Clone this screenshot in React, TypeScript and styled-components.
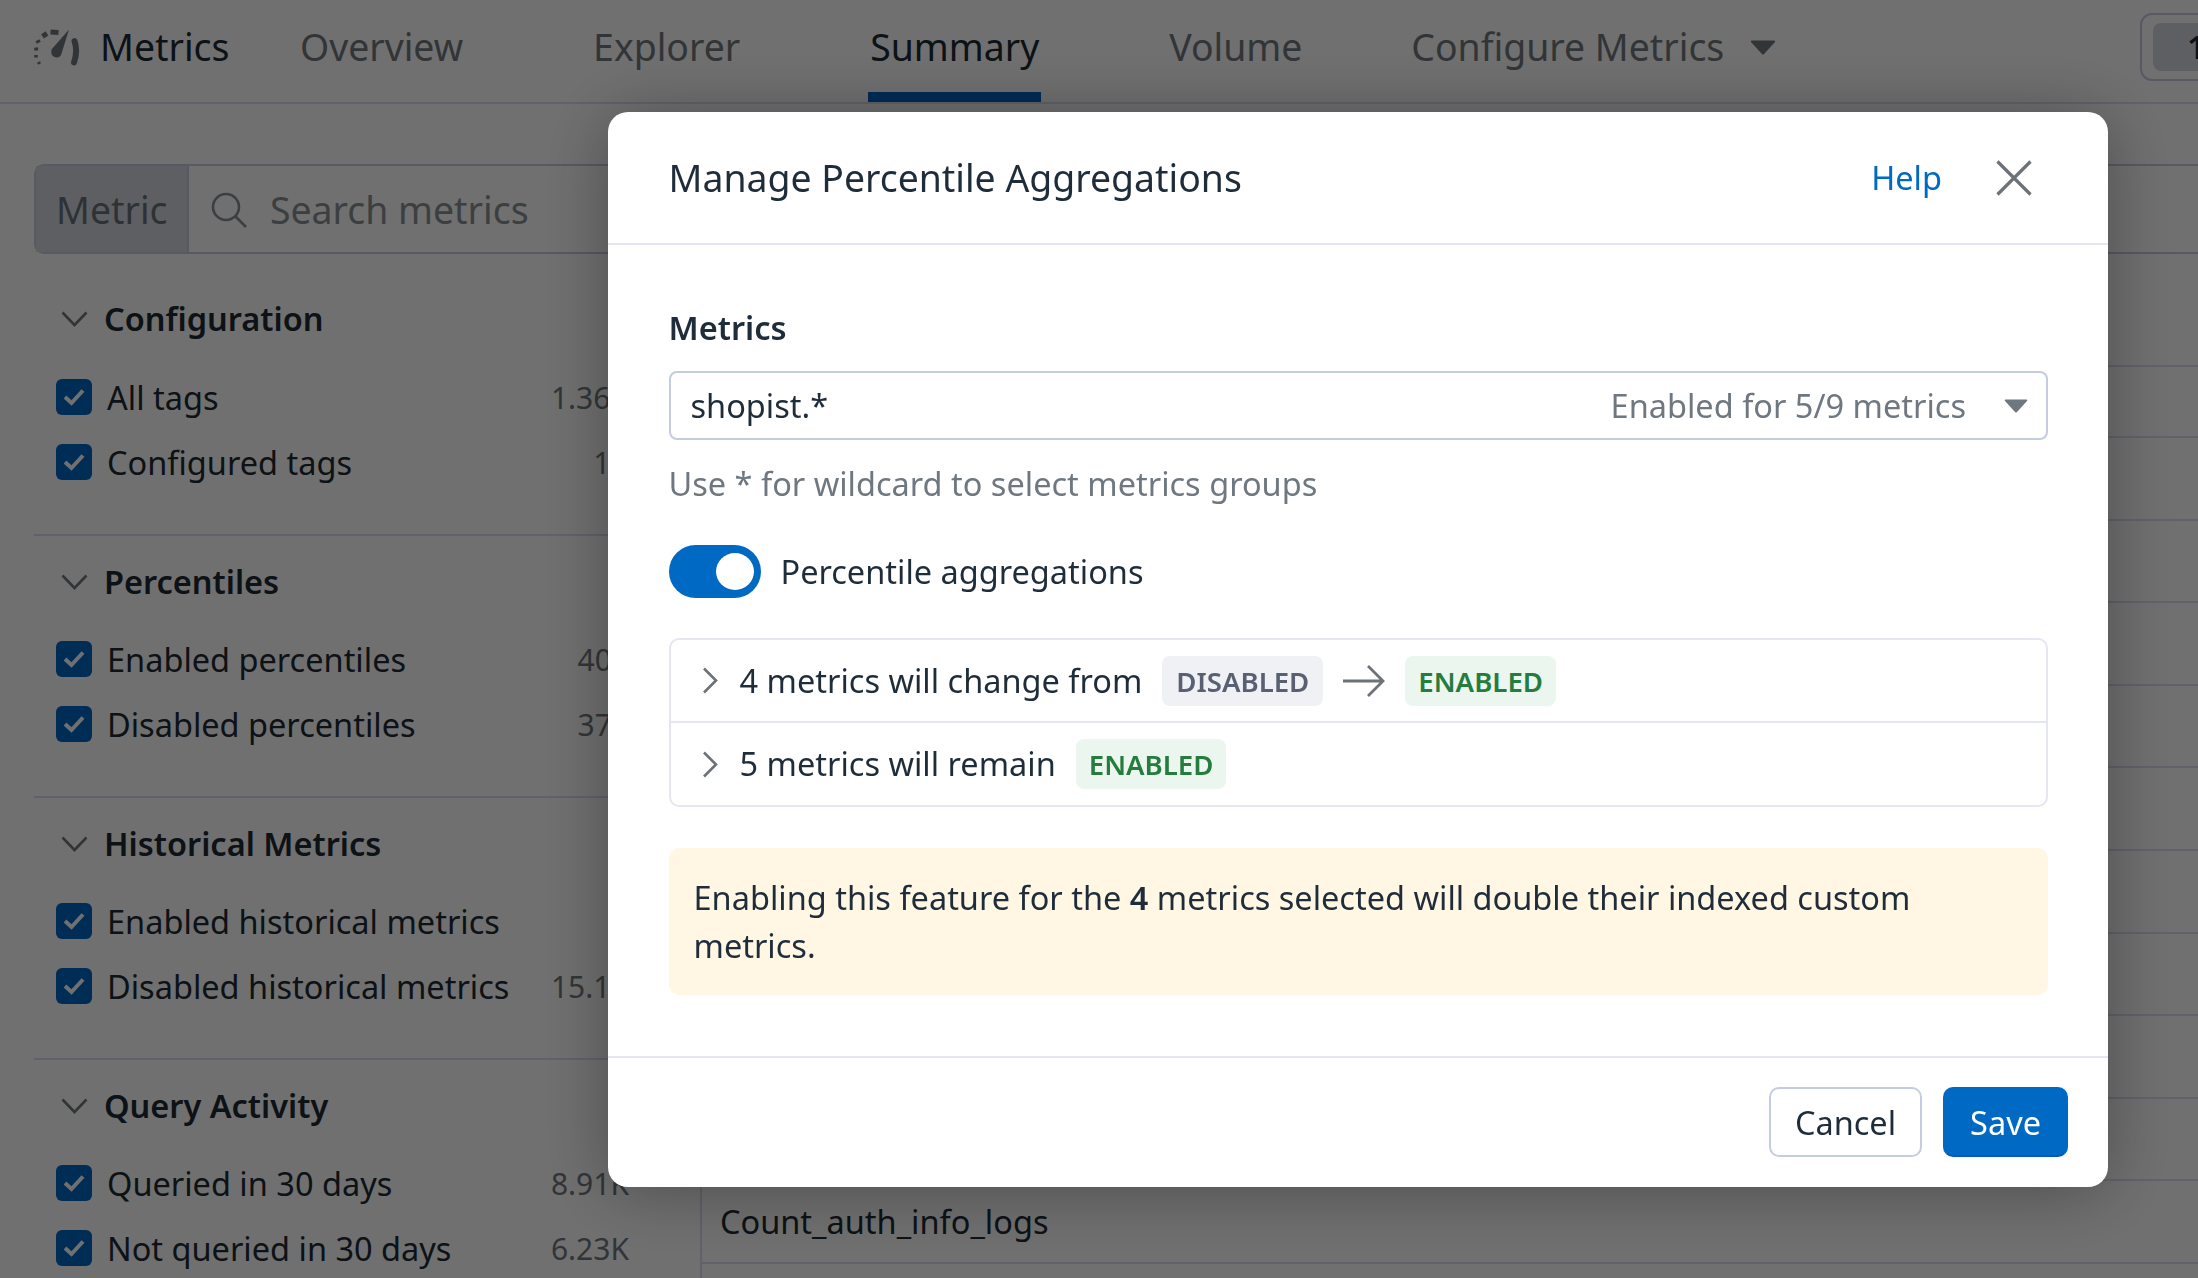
import React from 'react';
import styled, { createGlobalStyle } from 'styled-components';

const GlobalStyle = createGlobalStyle`
  html, body {
    margin: 0;
    padding: 0;
    background: #fff;
    overflow: hidden;
  }
  * {
    box-sizing: border-box;
  }
  body {
    font-family: "Noto Sans", "Open Sans", sans-serif;
    font-size: 32.5px;
    line-height: 44px;
    color: #1c2b34;
  }
`;

const Page = styled.div`
  width: 2198px;
  height: 1278px;
  overflow: hidden;
  display: flex;
  flex-direction: column;
`;

const Nav = styled.nav`
  flex: none;
  height: 104px;
  padding-left: 33px;
  display: flex;
  border-bottom: 2px solid #dde0f0;
  font-size: 37.4px;
`;

const Brand = styled.div`
  display: flex;
  align-items: center;
  gap: 20px;
  width: 265px;
  height: 92px;
  padding-top: 2px;
`;

const Tabs = styled.div`
  display: flex;
  gap: 126px;
`;

const Tab = styled.div<{ $active?: boolean }>`
  height: 102px;
  padding: 2px 2px 0;
  display: flex;
  align-items: center;
  gap: 26px;
  color: ${p => (p.$active ? '#1c2b34' : '#73797e')};
  border-bottom: 10px solid ${p => (p.$active ? '#0066c4' : 'transparent')};

  &:last-child {
    margin-left: -21px;
  }
`;

const Timepicker = styled.div`
  margin: 13px -60px 0 auto;
  width: 118px;
  height: 68px;
  padding: 8px 10px 8px 11px;
  border: 2px solid #c6cce0;
  border-radius: 12px;
`;

const TimepickerValue = styled.div`
  height: 48px;
  padding-left: 34px;
  border-radius: 8px;
  background: #d6d9e2;
  font-size: 33px;
  font-weight: 600;
  line-height: 48px;
`;

const SearchBar = styled.div`
  flex: none;
  display: flex;
  margin: 60px -40px 0 34px;
  height: 90px;
  border: 2px solid #c6cce0;
  border-radius: 10px;
  font-size: 37.4px;
`;

const SearchLabel = styled.div`
  width: 153px;
  padding: 1px 0 0 20px;
  display: flex;
  align-items: center;
  background: #d6d9e2;
  border-right: 2px solid #c6cce0;
  color: #6c7279;
`;

const SearchField = styled.div`
  display: flex;
  align-items: center;
  gap: 23px;
  padding: 1px 0 0 22px;
  color: #8a9097;
`;

const Columns = styled.div`
  flex: 1;
  display: grid;
  grid-template-columns: 702px 1fr;
  min-height: 0;
`;

const Sidebar = styled.aside`
  padding: 19px 20px 0 34px;
  border-right: 2px solid #dde0f0;
`;

const Section = styled.section<{ $first?: boolean }>`
  padding: 24px 0 39.5px;
  border-bottom: 2px solid #dde0f0;

  &:last-child {
    border-bottom: none;
  }
`;

const SectionTitle = styled.h3<{ $first?: boolean }>`
  margin: 0 0 ${p => (p.$first ? '23.5px' : '22.5px')};
  padding-left: 27px;
  display: flex;
  align-items: center;
  gap: 16px;
  font-size: inherit;
  line-height: 44px;
  font-weight: 600;
`;

const FacetRow = styled.div`
  height: 65px;
  padding: 0 51px 0 22px;
  display: flex;
  align-items: center;
`;

const Checkbox = styled.span`
  flex: none;
  width: 36px;
  height: 36px;
  margin-right: 15px;
  border-radius: 6px;
  background: #0066c4;
  display: flex;
  align-items: center;
  justify-content: center;
`;

const FacetLabel = styled.span`
  margin-top: 2px;
`;

const FacetCount = styled.span`
  margin: 2px 0 0 auto;
  font-size: 30px;
  color: #73797e;
`;

const Table = styled.main`
  margin-top: 111px;
  border-top: 2px solid #dde0f0;
`;

const TableHead = styled.div`
  height: 69px;
`;

const TableRow = styled.div`
  height: 82.6px;
  padding-left: 18px;
  border-top: 2px solid #dde0f0;
  display: flex;
  align-items: center;
`;

const Overlay = styled.div`
  position: fixed;
  inset: 0;
  background: rgba(0, 0, 0, 0.56);
`;

const Modal = styled.div`
  position: fixed;
  top: 112px;
  left: 608px;
  width: 1500px;
  background: #fff;
  border-radius: 20px;
  box-shadow: 0 4px 70px rgba(0, 0, 0, 0.32);
`;

const ModalHeader = styled.header`
  height: 133px;
  padding: 0 76px 0 60.5px;
  display: flex;
  align-items: center;
  border-bottom: 2px solid #e4e7f1;
`;

const ModalTitle = styled.h2`
  margin: 0;
  flex: 1;
  font-size: 37.4px;
  font-weight: 400;
  line-height: 44px;
  color: #1f2d3a;
`;

const HelpLink = styled.a`
  margin-right: 54px;
  color: #0069c4;
`;

const ModalBody = styled.div`
  padding: 61px 60px 61px 60.5px;
`;

const FieldLabel = styled.div`
  font-weight: 600;
  color: #1f2d3a;
`;

const SelectBox = styled.div`
  margin-top: 21px;
  height: 69px;
  padding: 0 18px 0 20px;
  display: flex;
  align-items: center;
  justify-content: space-between;
  border: 2px solid #c4cce0;
  border-radius: 8px;
  color: #1f2d3a;
`;

const SelectStatus = styled.div`
  display: flex;
  align-items: center;
  gap: 38px;
  color: #6f7881;
`;

const HintText = styled.div`
  margin-top: 22px;
  color: #6f7881;
`;

const ToggleRow = styled.div`
  margin-top: 39px;
  display: flex;
  align-items: center;
  gap: 20px;
  height: 53px;
  color: #1f2d3a;
`;

const ToggleTrack = styled.span`
  width: 92px;
  height: 53px;
  padding: 8px 7px;
  border-radius: 27px;
  background: #0069c4;
  display: flex;
  justify-content: flex-end;
`;

const ToggleKnob = styled.span`
  width: 38px;
  height: 37px;
  border-radius: 50%;
  background: #fff;
`;

const ChangeList = styled.div`
  margin-top: 40px;
  border: 2px solid #e4e7f1;
  border-radius: 10px;
  color: #1f2d3a;
`;

const ChangeRow = styled.div<{ $divided?: boolean }>`
  height: ${p => (p.$divided ? '84px' : '81px')};
  padding-left: 31px;
  display: flex;
  align-items: center;
  gap: 20px;
  border-top: ${p => (p.$divided ? '2px solid #e4e7f1' : 'none')};
`;

const ChangeText = styled.span`
  margin-left: 2px;
`;

const StatusTag = styled.span<{ $tone: 'muted' | 'success' }>`
  height: 50px;
  padding: 0 ${p => (p.$tone === 'success' ? '13px' : '14px')};
  display: flex;
  align-items: center;
  border-radius: 8px;
  font-size: 27.6px;
  font-weight: 600;
  background: ${p => (p.$tone === 'success' ? '#ebf6ee' : '#eff1f5')};
  color: ${p => (p.$tone === 'success' ? '#257c3e' : '#5a6072')};
`;

const Notice = styled.div`
  margin-top: 41px;
  padding: 25.5px 25px;
  border-radius: 10px;
  background: #fff6e3;
  line-height: 48px;
  color: #1f2d3a;
`;

const Strong = styled.b`
  font-weight: 600;
`;

const ModalFooter = styled.footer`
  padding: 29px 40px 30px;
  display: flex;
  justify-content: flex-end;
  gap: 21px;
  border-top: 2px solid #e4e7f1;
`;

const Button = styled.button<{ $primary?: boolean }>`
  height: 70px;
  padding: 2px ${p => (p.$primary ? '25px' : '24px')} 0;
  font: inherit;
  border-radius: 10px;
  border: 2px solid ${p => (p.$primary ? '#0069c4' : '#c4cce0')};
  border-bottom-color: ${p => (p.$primary ? '#0059c0' : '#c4cce0')};
  background: ${p => (p.$primary ? '#0069c4' : '#fff')};
  color: ${p => (p.$primary ? '#fff' : '#1f2d3a')};
`;

const Chevron = ({ open, color }: { open?: boolean; color: string }) =>
  open ? (
    <svg width="27" height="16" viewBox="0 0 27 16" fill="none">
      <path d="M1.5 1.5 L13.5 14 L25.5 1.5" stroke={color} strokeWidth="2.6" />
    </svg>
  ) : (
    <svg width="16" height="27" viewBox="0 0 16 27" fill="none">
      <path d="M2 1.5 L14 13.5 L2 25.5" stroke={color} strokeWidth="2.6" />
    </svg>
  );

const Caret = ({ color, width, height }: { color: string; width: number; height: number }) => (
  <svg width={width} height={height} viewBox="0 0 24 14">
    <path d="M1.5 0.5 H22.5 Q24 0.5 23 2 L13 13 Q12 14 11 13 L1 2 Q0 0.5 1.5 0.5 Z" fill={color} />
  </svg>
);

const MetricsLogo = () => (
  <svg width="47" height="37" viewBox="0 0 47 37" fill="none">
    <g stroke="#73797e">
      <path d="M5.5 33 L6.5 35" strokeWidth="3.4" />
      <path d="M3 26 L3 28.5" strokeWidth="3.6" />
      <path d="M3 18.5 L3.4 21.5" strokeWidth="4" />
      <path d="M4.4 11.2 L5.8 13.8" strokeWidth="4.4" />
      <path d="M9.5 7.4 L14 4.4" strokeWidth="5" />
      <path d="M17.5 3 L25.5 3.6" strokeWidth="5" />
    </g>
    <path d="M36 0.5 L18.5 20.5 Q17 27 23 28.5 Q28 29 29 23 Z" fill="#73797e" />
    <path d="M41.5 12 Q45 22 41 33.5" stroke="#73797e" strokeWidth="6" strokeLinecap="round" />
  </svg>
);

const SearchIcon = () => (
  <svg width="36" height="36" viewBox="0 0 36 36" fill="none">
    <circle cx="15" cy="15" r="13" stroke="#8a9097" strokeWidth="2.6" />
    <path d="M24.5 24.5 L35 35" stroke="#8a9097" strokeWidth="2.6" />
  </svg>
);

const CheckMark = () => (
  <svg width="22" height="18" viewBox="0 0 22 18" fill="none">
    <path d="M2 9 L8.5 15 L20 2.5" stroke="#fff" strokeWidth="4" />
  </svg>
);

const CloseIcon = () => (
  <svg width="36" height="36" viewBox="0 0 36 36" fill="none">
    <path d="M1.5 1.5 L34.5 34.5 M34.5 1.5 L1.5 34.5" stroke="#6c7278" strokeWidth="3.2" />
  </svg>
);

const ArrowIcon = () => (
  <svg width="42" height="34" viewBox="0 0 42 34" fill="none">
    <path d="M0 17 H40 M25 2 L40 17 L25 32" stroke="#6c7278" strokeWidth="2.8" />
  </svg>
);

const facets = [
  {
    title: 'Configuration',
    rows: [
      ['All tags', '1.36K'],
      ['Configured tags', '1K'],
    ],
  },
  {
    title: 'Percentiles',
    rows: [
      ['Enabled percentiles', '402'],
      ['Disabled percentiles', '378'],
    ],
  },
  {
    title: 'Historical Metrics',
    rows: [
      ['Enabled historical metrics', '2'],
      ['Disabled historical metrics', '15.1K'],
    ],
  },
  {
    title: 'Query Activity',
    rows: [
      ['Queried in 30 days', '8.91K'],
      ['Not queried in 30 days', '6.23K'],
    ],
  },
];

// only the row below the dialog can be read in the reference
const tableRows = ['', '', '', '', '', '', '', '', '', 'Count_auth_info_logs', ''];

export default function App() {
  return (
    <Page>
      <GlobalStyle />
      <Nav>
        <Brand>
          <MetricsLogo />
          <span>Metrics</span>
        </Brand>
        <Tabs>
          <Tab>Overview</Tab>
          <Tab>Explorer</Tab>
          <Tab $active>Summary</Tab>
          <Tab>Volume</Tab>
          <Tab>
            Configure Metrics
            <Caret color="#73797e" width={26} height={15} />
          </Tab>
        </Tabs>
        <Timepicker>
          <TimepickerValue>1</TimepickerValue>
        </Timepicker>
      </Nav>
      <SearchBar>
        <SearchLabel>Metric</SearchLabel>
        <SearchField>
          <SearchIcon />
          Search metrics
        </SearchField>
      </SearchBar>
      <Columns>
        <Sidebar>
          {facets.map((facet, i) => (
            <Section key={facet.title}>
              <SectionTitle $first={i === 0}>
                <Chevron open color="#73797e" />
                {facet.title}
              </SectionTitle>
              {facet.rows.map(([label, count]) => (
                <FacetRow key={label}>
                  <Checkbox>
                    <CheckMark />
                  </Checkbox>
                  <FacetLabel>{label}</FacetLabel>
                  <FacetCount>{count}</FacetCount>
                </FacetRow>
              ))}
            </Section>
          ))}
        </Sidebar>
        <Table>
          <TableHead />
          {tableRows.map((name, i) => (
            <TableRow key={i}>{name}</TableRow>
          ))}
        </Table>
      </Columns>
      <Overlay />
      <Modal>
        <ModalHeader>
          <ModalTitle>Manage Percentile Aggregations</ModalTitle>
          <HelpLink>Help</HelpLink>
          <CloseIcon />
        </ModalHeader>
        <ModalBody>
          <FieldLabel>Metrics</FieldLabel>
          <SelectBox>
            shopist.*
            <SelectStatus>
              Enabled for 5/9 metrics
              <Caret color="#6f7881" width={24} height={14} />
            </SelectStatus>
          </SelectBox>
          <HintText>Use * for wildcard to select metrics groups</HintText>
          <ToggleRow>
            <ToggleTrack>
              <ToggleKnob />
            </ToggleTrack>
            Percentile aggregations
          </ToggleRow>
          <ChangeList>
            <ChangeRow>
              <Chevron color="#6c7278" />
              <ChangeText>4 metrics will change from</ChangeText>
              <StatusTag $tone="muted">DISABLED</StatusTag>
              <ArrowIcon />
              <StatusTag $tone="success">ENABLED</StatusTag>
            </ChangeRow>
            <ChangeRow $divided>
              <Chevron color="#6c7278" />
              <ChangeText>5 metrics will remain</ChangeText>
              <StatusTag $tone="success">ENABLED</StatusTag>
            </ChangeRow>
          </ChangeList>
          <Notice>
            Enabling this feature for the <Strong>4</Strong> metrics selected will double their indexed custom metrics.
          </Notice>
        </ModalBody>
        <ModalFooter>
          <Button>Cancel</Button>
          <Button $primary>Save</Button>
        </ModalFooter>
      </Modal>
    </Page>
  );
}
